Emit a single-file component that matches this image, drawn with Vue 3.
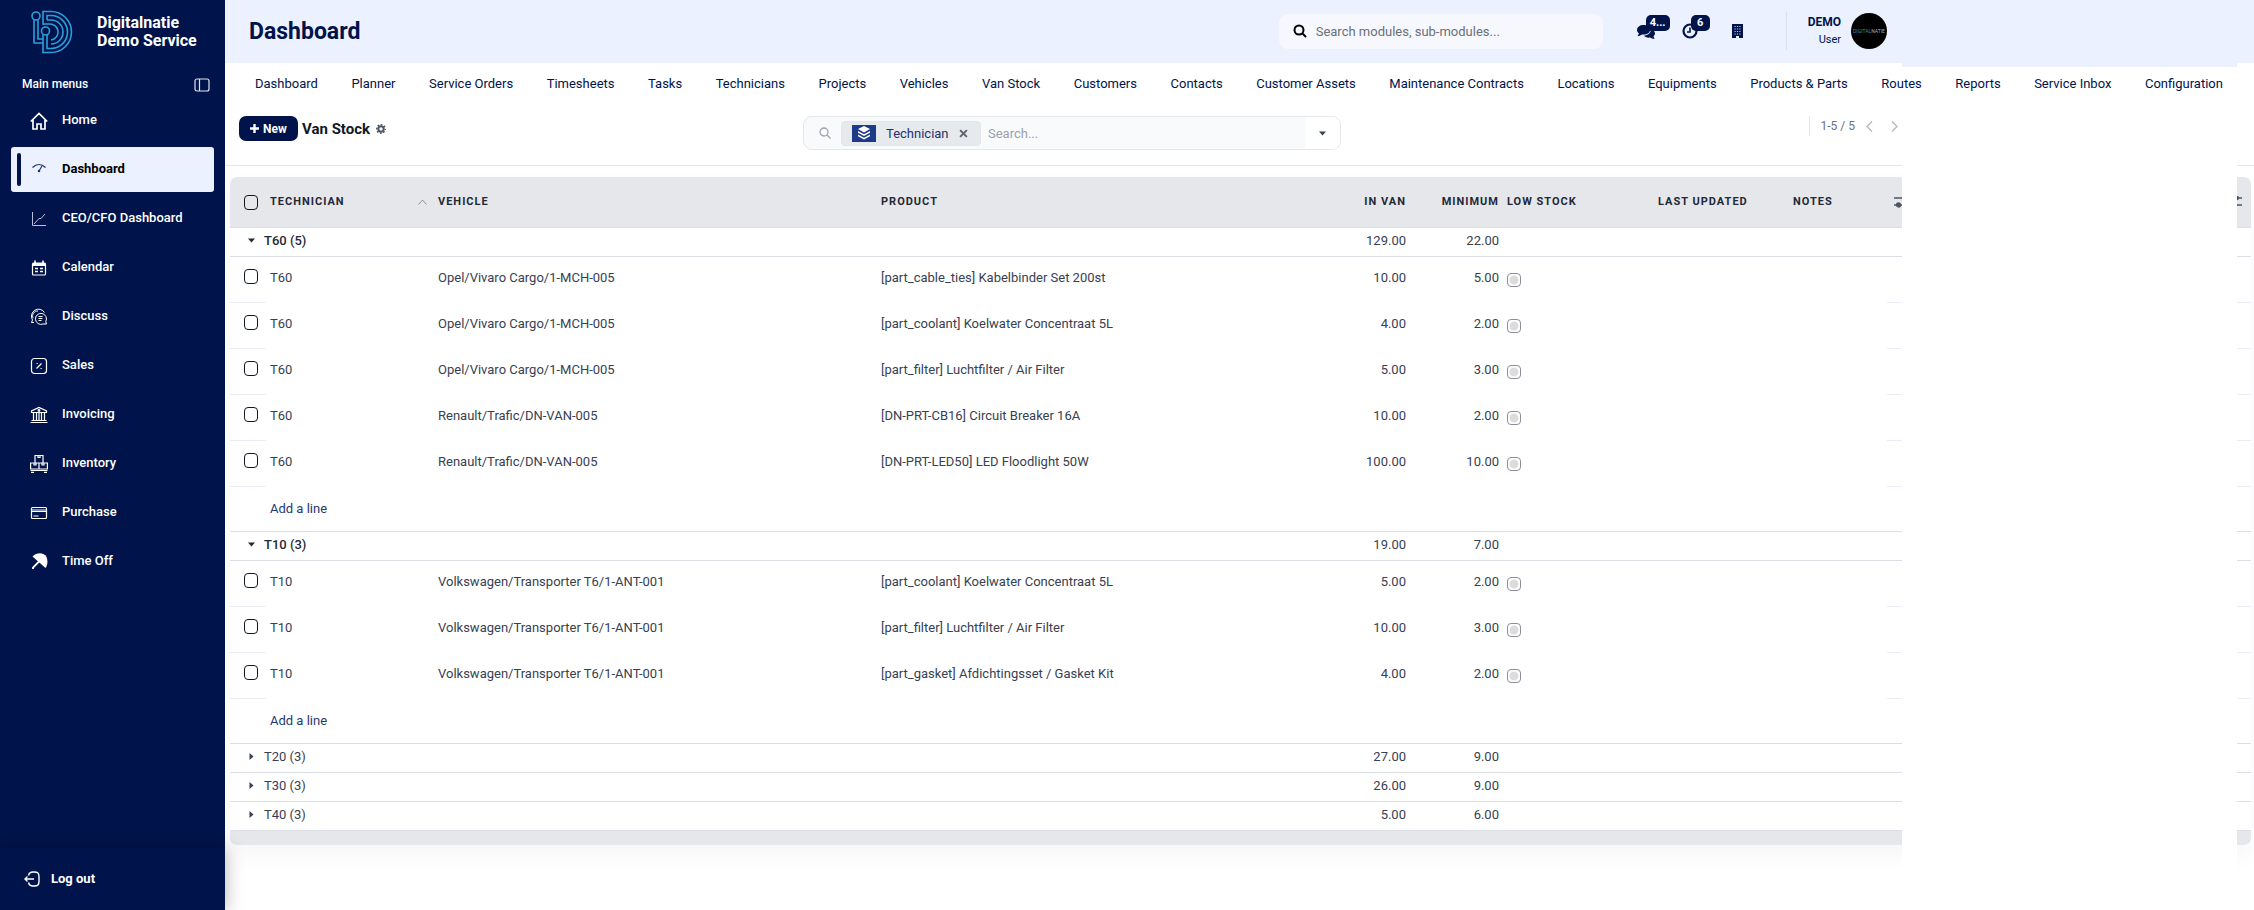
<script setup>
import { ref } from 'vue'

const menus = ['Home', 'Dashboard', 'CEO/CFO Dashboard', 'Calendar', 'Discuss', 'Sales', 'Invoicing', 'Inventory', 'Purchase', 'Time Off']
const active = ref('Dashboard')

const tabs = ['Dashboard', 'Planner', 'Service Orders', 'Timesheets', 'Tasks', 'Technicians', 'Projects', 'Vehicles', 'Van Stock', 'Customers', 'Contacts', 'Customer Assets', 'Maintenance Contracts', 'Locations', 'Equipments', 'Products & Parts', 'Routes', 'Reports', 'Service Inbox', 'Configuration']

const opel = 'Opel/Vivaro Cargo/1-MCH-005'
const renault = 'Renault/Trafic/DN-VAN-005'
const vw = 'Volkswagen/Transporter T6/1-ANT-001'

const groups = ref([
  {
    name: 'T60', count: 5, inVan: '129.00', minimum: '22.00', open: true,
    rows: [
      { vehicle: opel, product: '[part_cable_ties] Kabelbinder Set 200st', inVan: '10.00', minimum: '5.00' },
      { vehicle: opel, product: '[part_coolant] Koelwater Concentraat 5L', inVan: '4.00', minimum: '2.00' },
      { vehicle: opel, product: '[part_filter] Luchtfilter / Air Filter', inVan: '5.00', minimum: '3.00' },
      { vehicle: renault, product: '[DN-PRT-CB16] Circuit Breaker 16A', inVan: '10.00', minimum: '2.00' },
      { vehicle: renault, product: '[DN-PRT-LED50] LED Floodlight 50W', inVan: '100.00', minimum: '10.00' },
    ],
  },
  {
    name: 'T10', count: 3, inVan: '19.00', minimum: '7.00', open: true,
    rows: [
      { vehicle: vw, product: '[part_coolant] Koelwater Concentraat 5L', inVan: '5.00', minimum: '2.00' },
      { vehicle: vw, product: '[part_filter] Luchtfilter / Air Filter', inVan: '10.00', minimum: '3.00' },
      { vehicle: vw, product: '[part_gasket] Afdichtingsset / Gasket Kit', inVan: '4.00', minimum: '2.00' },
    ],
  },
  { name: 'T20', count: 3, inVan: '27.00', minimum: '9.00', open: false, rows: [] },
  { name: 'T30', count: 3, inVan: '26.00', minimum: '9.00', open: false, rows: [] },
  { name: 'T40', count: 3, inVan: '5.00', minimum: '6.00', open: false, rows: [] },
])
</script>

<template>
  <div class="app">
    <aside class="sidebar">
      <div class="brand">
        <svg class="logo" viewBox="0 0 42 44" fill="none" stroke="#2a9fdc" stroke-width="1.6">
          <circle cx="5" cy="6" r="4" />
          <path d="M3 10v23h9M7 10v19h5" />
          <path d="M12 15V1.500h8a20.500 20.500 0 0 1 0 41h-8V25" />
          <path d="M16 25v13.500h4a16.500 16.500 0 0 0 0-33h-4V10" />
          <path d="M16 10h4a12 12 0 0 1 0 24" />
          <path d="M12 14h6a8 8 0 0 1 2 16" />
          <circle cx="14.500" cy="21" r="4" />
        </svg>
        <div class="brand-name">Digitalnatie<br>Demo Service</div>
      </div>
      <div class="menu-head">
        <span>Main menus</span>
        <button class="plain" aria-label="Collapse sidebar">
          <svg width="16" height="14" viewBox="0 0 16 14" fill="none" stroke="#dfe4f2" stroke-width="1.2"><rect x="1" y="1" width="14" height="12" rx="2" /><path d="M5.500 1v12" /></svg>
        </button>
      </div>
      <nav class="menu">
        <a v-for="m in menus" :key="m" href="#" :class="{ active: m === active }" @click.prevent="active = m">
          <svg class="mi" viewBox="0 0 18 18" fill="none" stroke="currentColor" stroke-width="1.200">
            <g v-if="m === 'Home'" stroke-width="1.700"><path d="M.8 9.500 9 1.500l8.200 8M3 8v9h4v-5h4v5h4V8" /></g>
            <g v-else-if="m === 'Dashboard'" stroke="#23366b"><path d="M2.500 6.500c4-4 9-4 13 0" /><path d="m12 5-3 5" /><circle cx="9" cy="10" r=".7" fill="#23366b" /></g>
            <g v-else-if="m === 'CEO/CFO Dashboard'" stroke="#b9c1da" stroke-width="1"><path d="M2.500 2v13.500H16M4 14 9 8.500h2l4-4.500" /></g>
            <g v-else-if="m === 'Calendar'"><rect x="2.500" y="4" width="13" height="12" rx="1" /><path d="M3 5.500h12" stroke-width="3" /><path d="M5 1.500V4M13 1.500V4M5 9.500h3M10 9.500h3M5 12.500h3M10 12.500h3" stroke-width="1.600" /></g>
            <g v-else-if="m === 'Discuss'" stroke-width="1"><path d="M4 14.500H1.500L2.500 12A7 7 0 1 1 14.500 4.500" /><path d="M3 10a5 5 0 0 1 5-7" /><path d="M15.800 13.500 16.500 16H13a5.500 5.500 0 1 1 2.800-2.500ZM8.500 8.500h4M8.500 10.500h4M8.500 12.500h3" /></g>
            <g v-else-if="m === 'Sales'"><rect x="1.500" y="1.500" width="15" height="15" rx="3" /><path d="m6.500 11.500 5-5M6.500 6.500h1.200M10.500 11.500h1.200" /></g>
            <g v-else-if="m === 'Invoicing'"><path d="M1.500 6.500V5L9 1.500 16.500 5v1.500zM3.500 7v7M6.500 7v7M9 7v7M11.500 7v7M14.500 7v7M1.500 14.500h15M.5 16.500h17" /><circle cx="9" cy="4.500" r=".8" /></g>
            <g v-else-if="m === 'Inventory'"><path d="M5 7.500v-7h8v7M8 .5v2h2v-2M.6 8h16.800v6H.6zM9 8v6M4 8v2h2V8M12 8v2h2V8M.5 15.500h17M1 17.400h3M14 17.400h3" /></g>
            <g v-else-if="m === 'Purchase'"><rect x="1.500" y="3.500" width="15" height="11" rx="1" /><path d="M1.500 6h15M1.500 7.500h15M3.500 12h5" stroke-width="1" /></g>
            <g v-else fill="currentColor" stroke="none"><path d="M2.500 3.500C7-1 14-.5 16.500 4c1.500 3.500 1.200 8-1 11z" /><path d="m9 8.500-6 6v1.500" fill="none" stroke="currentColor" stroke-width="1.800" /></g>
          </svg>
          <span>{{ m }}</span>
        </a>
      </nav>
      <div class="logout">
        <a href="#">
          <svg width="16" height="16" viewBox="0 0 16 16" fill="none" stroke="#fff" stroke-width="1.400"><path d="M4.500 4.500C5 2 6 1 9 1h1c4 0 5 1 5 5v4c0 4-1 5-5 5H9c-3 0-4-1-4.500-3.500M10 8H1.500M3.500 5.500 1 8l2.500 2.500" /></svg>
          Log out
        </a>
      </div>
    </aside>

    <main class="main">
      <header class="topbar">
        <h1>Dashboard</h1>
        <div class="tools">
          <label class="module-search">
            <svg width="14" height="14" viewBox="0 0 14 14" fill="none" stroke="#000" stroke-width="2"><circle cx="6" cy="6" r="4.500" /><path d="m9.500 9.500 3.500 3.500" /></svg>
            <input type="text" aria-label="Search modules" placeholder="Search modules, sub-modules...">
          </label>
          <div class="actions">
            <button class="plain act" aria-label="Messages">
              <svg width="18" height="16" viewBox="0 0 18 16" fill="#00144b"><path d="M6.500 2C3 2 0 4 0 7c0 1.500.8 2.500 2 3.500L.5 13c2 0 3.500-.7 4.500-1.500C10 12 13 10 13 7S10 2 6.500 2Z" /><path d="M14 6c2.500 1 4 2.500 4 4.500 0 1-.6 2-1.500 2.700L17.500 16c-2 0-3.300-.6-4.200-1.400C10 15 8 14 7 12.500c4 0 7-2.500 7-6.500Z" /></svg>
              <span class="badge">4...</span>
            </button>
            <button class="plain act" aria-label="Activities">
              <svg width="16" height="16" viewBox="0 0 16 16" fill="none" stroke="#00144b" stroke-width="2.200"><circle cx="8" cy="8" r="6.500" /><path d="M8 4.500V9H5" stroke-width="1.600" /></svg>
              <span class="badge">6</span>
            </button>
            <button class="plain act company" aria-label="Company">
              <svg width="11" height="14" viewBox="0 0 11 14"><path d="M0 0h11v14H7v-2H4v2H0z" fill="#00144b" /><path d="M2.500 2.500h6M2.500 5h6M2.500 7.500h6M2.500 10h6" stroke="#b9cbee" stroke-width="1" stroke-dasharray="1.200 1.200" /></svg>
            </button>
          </div>
          <div class="user">
            <div class="who"><strong>DEMO</strong><span>User</span></div>
            <div class="avatar"><i>DIGITAL</i>NATIE</div>
          </div>
        </div>
      </header>

      <nav class="tabs">
        <a v-for="t in tabs" :key="t" href="#">{{ t }}</a>
      </nav>

      <div class="content">
        <section class="control">
          <div class="crumb">
            <button class="new">
              <svg width="9" height="9" viewBox="0 0 9 9" stroke="#fff" stroke-width="2.400"><path d="M4.500 0v9M0 4.500h9" /></svg>New
            </button>
            <h2>Van Stock</h2>
            <button class="plain gear" aria-label="Settings">
              <svg width="10" height="10" viewBox="0 0 10 10" fill="none" stroke="#4b5563"><circle cx="5" cy="5" r="2.700" stroke-width="2" /><circle cx="5" cy="5" r="4.300" stroke-width="1.400" stroke-dasharray="1.700 1.677" stroke-dashoffset=".8" /></svg>
            </button>
          </div>
          <div class="search">
            <svg class="lens" width="12" height="12" viewBox="0 0 12 12" fill="none" stroke="#9ca3af" stroke-width="1.300"><circle cx="5" cy="5" r="4" /><path d="m8 8 3.500 3.500" /></svg>
            <div class="facet">
              <span class="facet-icon">
                <svg width="14" height="14" viewBox="0 0 14 14" fill="#fff"><path d="m7 0 6 3-6 3.500L1 3zM1 5l6 3.300L13 5v1.700L7 10 1 6.700zM1 8.500l6 3.300 6-3.300v1.700L7 13.500 1 10.200z" /></svg>
              </span>
              <span>Technician</span>
              <button class="plain" aria-label="Remove filter"><svg width="9" height="9" viewBox="0 0 8 8" stroke="#5b6470" stroke-width="1.800"><path d="m1 1 6 6M7 1 1 7" /></svg></button>
            </div>
            <input type="text" aria-label="Search records" placeholder="Search...">
            <button class="toggle" aria-label="Search options"><svg width="7" height="5" viewBox="0 0 7 5" fill="#374151"><path d="M0 .5h7L3.500 4.500z" /></svg></button>
          </div>
          <div class="pager">
            <span>1-5 / 5</span>
            <button class="plain" aria-label="Previous"><svg width="7" height="11" viewBox="0 0 7 11" fill="none" stroke="#b4b8bf" stroke-width="1.300"><path d="M6 .5 1 5.500l5 5" /></svg></button>
            <button class="plain" aria-label="Next"><svg width="7" height="11" viewBox="0 0 7 11" fill="none" stroke="#b4b8bf" stroke-width="1.300"><path d="m1 .5 5 5-5 5" /></svg></button>
          </div>
        </section>

        <section class="list">
          <table>
            <colgroup>
              <col class="c-check"><col class="c-tech"><col class="c-vehicle"><col class="c-product"><col class="c-van"><col class="c-min"><col class="c-low"><col class="c-upd"><col class="c-notes"><col>
            </colgroup>
            <thead>
              <tr>
                <th class="check"><input type="checkbox" aria-label="Select all"></th>
                <th>
                  <div class="sorted">Technician <svg width="9" height="6" viewBox="0 0 9 6" fill="none" stroke="#8b93a1"><path d="m.5 5.500 4-4.500 4 4.500" /></svg></div>
                </th>
                <th>Vehicle</th>
                <th>Product</th>
                <th class="num">In Van</th>
                <th class="num">Minimum</th>
                <th>Low Stock</th>
                <th>Last Updated</th>
                <th>Notes</th>
                <th class="opt">
                  <div class="opts">
                    <svg v-for="n in 2" :key="n" width="16" height="12" viewBox="0 0 16 12" stroke="#4b5563" stroke-width="1.300"><path d="M0 2h16M0 9h16" /><circle cx="11" cy="2" r="1.500" fill="#4b5563" /><circle cx="4.500" cy="9" r="2" fill="#4b5563" /></svg>
                  </div>
                </th>
              </tr>
            </thead>
            <tbody v-for="g in groups" :key="g.name">
              <tr class="group" :class="{ open: g.open }">
                <th colspan="4">
                  <button class="plain" @click="g.open = !g.open">
                    <svg width="9" height="9" viewBox="0 0 9 9" fill="currentColor"><path v-if="g.open" d="M1 2.500h7L4.500 6.500z" /><path v-else d="M2.500 1v7l4-3.500z" /></svg>
                    {{ g.name }} ({{ g.count }})
                  </button>
                </th>
                <td class="num">{{ g.inVan }}</td>
                <td class="num">{{ g.minimum }}</td>
                <td colspan="4"></td>
              </tr>
              <template v-if="g.open">
                <tr v-for="(r, i) in g.rows" :key="i" class="row">
                  <td class="check"><input type="checkbox" :aria-label="'Select ' + r.product"></td>
                  <td>{{ g.name }}</td>
                  <td>{{ r.vehicle }}</td>
                  <td>{{ r.product }}</td>
                  <td class="num">{{ r.inVan }}</td>
                  <td class="num">{{ r.minimum }}</td>
                  <td class="low"><input type="checkbox" disabled aria-label="Low stock"></td>
                  <td></td>
                  <td></td>
                  <td class="opt"></td>
                </tr>
                <tr v-if="g.rows.length" class="add">
                  <td></td>
                  <td colspan="9"><a href="#">Add a line</a></td>
                </tr>
              </template>
            </tbody>
            <tfoot><tr><td colspan="10"></td></tr></tfoot>
          </table>
        </section>
        <div class="panel"></div>
      </div>
    </main>
  </div>
</template>

<style>
body { background: #fff; }
</style>

<style scoped>
* { box-sizing: border-box; }
.app { display: flex; min-height: 100vh; font-family: Roboto, "Liberation Sans", sans-serif; font-size: 13px; color: #374151; overflow: hidden; }
a { color: inherit; text-decoration: none; }
button, input { font-family: inherit; }
.plain { background: none; border: 0; padding: 0; color: inherit; font: inherit; display: inline-flex; align-items: center; cursor: pointer; }
svg { display: block; flex: none; }

.sidebar { flex: 0 0 225px; background: #00144b; color: #fff; display: flex; flex-direction: column; z-index: 2; }
.brand { display: flex; align-items: center; gap: 24px; padding: 10px 0 0 31px; height: 54px; }
.logo { width: 42px; height: 44px; }
.brand-name { font-size: 16px; font-weight: 700; line-height: 18px; white-space: nowrap; }
.menu-head { display: flex; justify-content: space-between; align-items: center; height: 30px; padding: 0 15px 0 22px; margin-top: 16px; font-size: 12px; font-weight: 500; }
.menu-head span { margin-bottom: 2px; }
.menu { display: flex; flex-direction: column; gap: 4px; padding: 0 11px; flex: 1; margin-top: -2px; }
.menu a { position: relative; display: flex; align-items: center; gap: 14px; height: 45px; padding-left: 19px; border-radius: 3px; font-weight: 500; }
.menu a span { margin-bottom: 3px; }
.mi { width: 18px; height: 18px; }
.menu a.active { background: #ebf1fe; color: #000; font-weight: 700; }
.menu a.active::before { content: ""; position: absolute; left: 6px; top: 6px; bottom: 6px; width: 4px; border-radius: 2px; background: #00144b; }
.logout { height: 62px; padding: 22px 24px; box-shadow: 0 0 18px rgba(0, 0, 0, .3); background: #00144b; }
.logout a { display: flex; align-items: center; gap: 11px; font-weight: 700; line-height: 18px; }

.main { flex: 1; min-width: 0; display: flex; flex-direction: column; }
.topbar { position: relative; height: 63px; background: #ebf1fe; display: flex; justify-content: space-between; align-items: center; padding: 0 367px 1px 24px; color: #00144b; }
/* Upper edge of the side drawer */
.topbar::after { content: ""; position: absolute; top: 63px; right: 17px; width: 335px; height: 4px; background: #ebf1fe; }
h1 { margin: 0; font-size: 23px; font-weight: 700; }
.tools { display: flex; align-items: center; }
.module-search { display: flex; align-items: center; gap: 9px; width: 324px; height: 35px; border-radius: 9px; background: #f6f8fe; padding: 0 14px; }
.module-search input { flex: 1; border: 0; background: none; outline: 0; font-size: 13px; padding: 0; color: #333; }
.module-search input::placeholder { color: #6b7078; opacity: 1; }
.actions { display: flex; align-items: center; gap: 25px; margin-left: 34px; height: 38px; }
.act { position: relative; width: 20px; height: 20px; }
.badge { position: absolute; left: 9px; top: -6px; height: 16px; min-width: 19px; padding: 0 4px; border-radius: 5px; background: #00144b; color: #fff; font-size: 11px; font-weight: 700; line-height: 16px; text-align: center; }
.company { margin-left: 5px; width: 12px; }
.user { display: flex; align-items: center; gap: 10px; border-left: 1px solid #d9dfee; margin-left: 42px; padding-left: 21px; height: 38px; }
.who { display: flex; flex-direction: column; align-items: flex-end; line-height: 18px; }
.who strong { font-weight: 700; font-size: 12px; }
.who span { font-size: 11px; }
.avatar { width: 36px; height: 36px; border-radius: 50%; background: #000; color: #aaa; display: flex; align-items: center; justify-content: center; font-size: 5px; overflow: hidden; }
.avatar i { font-style: normal; color: #2a8fb8; }

.tabs { display: flex; justify-content: space-between; align-items: center; height: 42px; padding: 0 31px 2px 30px; color: #00144b; white-space: nowrap; }

.content { position: relative; flex: 1; }
.control { display: grid; grid-template-columns: 1fr 538px 1fr; height: 61px; padding: 11px 349px 0 14px; border-bottom: 1px solid #e5e7eb; align-items: start; }
.crumb { display: flex; align-items: center; }
.new { display: flex; align-items: center; gap: 4px; height: 25px; width: 59px; justify-content: center; padding: 0; border: 0; border-radius: 7px; background: #00144b; color: #fff; font-size: 12px; font-weight: 700; }
h2 { margin: 0 6px 0 4px; font-size: 15px; font-weight: 700; color: #111827; }
.search { display: flex; align-items: center; height: 34px; border: 1px solid #e5e7eb; border-radius: 9px; background: #f9fafc; overflow: hidden; }
.lens { margin: 0 10px 0 15px; }
.facet { display: flex; align-items: center; width: 140px; height: 25px; padding-left: 10px; border: 1px solid #e2e5e9; border-radius: 4px; background: #e7eaed; color: #1f3070; }
.facet > span:nth-child(2) { margin: 0 10px; }
.facet-icon { width: 24px; height: 17px; background: #1e3a8a; display: flex; align-items: center; justify-content: center; }
.search input { flex: 1; min-width: 0; border: 0; background: none; outline: 0; padding: 0 7px; font-size: 13px; }
.search input::placeholder { color: #9aa1ad; opacity: 1; }
.toggle { width: 35px; height: 100%; border: 0; background: #fff; display: flex; align-items: center; justify-content: center; padding: 0; }
.pager { justify-self: end; display: flex; align-items: center; gap: 18px; height: 20px; margin-right: 7px; padding-left: 11px; border-left: 1px solid #e5e7eb; font-size: 12px; color: #6b7280; }
.pager span { margin-right: -7px; }

.list { margin: 11px 3px 0 5px; border-radius: 7px; overflow: hidden; box-shadow: 0 10px 24px rgba(0, 0, 0, .04); background: #fff; }
table { width: 100%; table-layout: fixed; border-collapse: separate; border-spacing: 0; }
.c-check { width: 36px; }
.c-tech { width: 168px; }
.c-vehicle { width: 443px; }
.c-product { width: 441px; }
.c-van { width: 92px; }
.c-min { width: 93px; }
.c-low { width: 151px; }
.c-upd { width: 135px; }
.c-notes { width: 98px; }
th, td { padding: 0 4px; text-align: left; white-space: nowrap; }
.num { text-align: right; }
thead th { height: 51px; padding-bottom: 1px; background: #e5e7eb; border-bottom: 1px solid #dcdfe4; font-size: 11px; font-weight: 700; letter-spacing: 1px; text-transform: uppercase; color: #1f2937; }
.sorted { display: flex; justify-content: space-between; align-items: center; padding-right: 3px; }
.opts { display: flex; justify-content: space-between; padding: 0 5px 0 3px; }
.check { padding: 0 0 0 14px; }
input[type="checkbox"] { appearance: none; display: block; width: 14px; height: 15px; margin: 0; border: 1px solid #111827; border-radius: 4px; background: #fff; }
thead input[type="checkbox"] { background: none; }
.group > * { height: 29px; border-bottom: 1px solid #dcdfe5; padding-bottom: 3px; }
.group th { font-weight: 400; padding-left: 17px; }
.group.open th { font-weight: 500; color: #1f2937; }
.group button { gap: 8px; }
.row td { height: 46px; border-bottom: 1px solid transparent; padding-bottom: 4px; }
.row td.check { border-bottom-color: #eaeef4; padding-bottom: 6px; }
.row td.opt { border-bottom-color: #eaeef4; }
.row td.low { padding-bottom: 0; }
.low input[type="checkbox"] { height: 14px; border-color: #8b8f99; background: radial-gradient(circle, #dcdcdc 4px, #fff 5px); }
.add td { height: 45px; padding-bottom: 2px; border-bottom: 1px solid #dcdfe5; color: #1e3a6f; }
tfoot td { height: 14px; background: #e5e7eb; }

.panel { position: absolute; top: 0; bottom: 0; right: 17px; width: 335px; background: #fff; }
</style>
